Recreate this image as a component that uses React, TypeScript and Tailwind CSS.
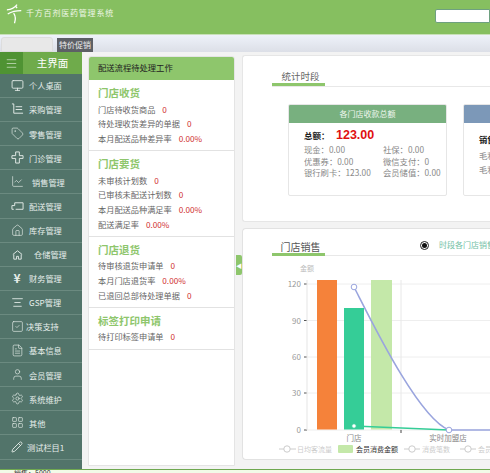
import React from "react";
import { Monitor, Tag, ChartLine, House, AlignCenter, SquareCheck, FileText, User, Settings, LayoutGrid, Pencil, Menu } from "lucide-react";

const font = { fontFamily: '"Noto Sans CJK SC", "Liberation Sans", sans-serif' };

function Cart() { return <svg width="13" height="13" viewBox="0 0 14 14" fill="none" stroke="currentColor"><path d="M1 1h2v10h10M5 4h7M5 7h7" /></svg>; }
function Cross() { return <svg width="13" height="13" viewBox="0 0 14 14" fill="none" stroke="currentColor"><path d="M5 1h4v4h4v3H9v5H5V8H1V5h4z" /></svg>; }
function Truck() { return <svg width="13" height="13" viewBox="0 0 14 14" fill="none" stroke="currentColor"><path d="M4 3h9v7H5M4 3v3H1v4h2" /></svg>; }
function Store() { return <svg width="13" height="13" viewBox="0 0 14 14" fill="none" stroke="currentColor" strokeWidth="1"><path d="M2 7l5-4 5 4M3 7v5h3V9h2v3h3V7" /></svg>; }
function Yen() { return <span className="text-[12px] font-bold leading-none">¥</span>; }

const sw = 1.2;
const items: [React.ReactNode, string, string][] = [
  [<Monitor size={13} strokeWidth={1.6} />, "个人桌面", ""],
  [<Cart />, "采购管理", ""],
  [<Tag size={13} strokeWidth={sw} />, "零售管理", ""],
  [<Cross />, "门诊管理", ""],
  [<ChartLine size={13} strokeWidth={sw} />, "销售管理", "ml-[3px]"],
  [<Truck />, "配送管理", ""],
  [<House size={13} strokeWidth={sw} />, "库存管理", ""],
  [<Store />, "仓储管理", "ml-[5px]"],
  [<Yen />, "财务管理", ""],
  [<AlignCenter size={13} strokeWidth={1.6} />, "GSP管理", ""],
  [<SquareCheck size={13} strokeWidth={sw} />, "决策支持", "-ml-[3px]"],
  [<FileText size={13} strokeWidth={sw} />, "基本信息", ""],
  [<User size={13} strokeWidth={sw} />, "会员管理", ""],
  [<Settings size={13} strokeWidth={sw} />, "系统维护", ""],
  [<LayoutGrid size={13} strokeWidth={sw} />, "其他", ""],
  [<Pencil size={12} strokeWidth={1.8} />, "测试栏目1", "-ml-[2px]"],
];

const groups: { title: string; rows: [string, string][] }[] = [
  { title: "门店收货", rows: [["门店待收货商品", "0"], ["待处理收货差异的单据", "0"], ["本月配送品种差异率", "0.00%"]] },
  { title: "门店要货", rows: [["未审核计划数", "0"], ["已审核未配送计划数", "0"], ["本月配送品种满足率", "0.00%"], ["配送满足率", "0.00%"]] },
  { title: "门店退货", rows: [["待审核退货申请单", "0"], ["本月门店退货率", "0.00%"], ["已退回总部待处理单据", "0"]] },
  { title: "标签打印申请", rows: [["待打印标签申请单", "0"]] },
];

function Chart() {
  const ys: [number, string][] = [[284, "120"], [320.5, "90"], [357, "60"], [393, "30"], [430, "0"]];
  return (
    <svg width="247" height="231" viewBox="243 229 247 231" className="absolute left-0 top-0" style={font}>
      {ys.map(([y, l]) => (
        <g key={l}>
          <line x1="307" y1={y} x2="490" y2={y} stroke="#eeeeee" />
          <line x1="304" y1={y} x2="307" y2={y} stroke="#555" />
          <text x="301" y={y + 3} textAnchor="end" fontSize="8" fill="#999">{l}</text>
        </g>
      ))}
      <text x="307" y="271" textAnchor="middle" fontSize="7" fill="#bbb">金额</text>
      <line x1="307" y1="280" x2="307" y2="430" stroke="#e5e5e5" />
      <line x1="401" y1="280" x2="401" y2="430" stroke="#e8e8e8" />
      <line x1="401" y1="430" x2="401" y2="433" stroke="#444" />
      <rect x="317" y="280" width="20" height="149.5" fill="#f5823a" />
      <rect x="344" y="308" width="20" height="121.5" fill="#35cd97" />
      <rect x="371" y="280" width="21" height="149.5" fill="#c4e8a9" />
      <path d="M354 287 C 370 318, 418 418, 449 430 L490 430" fill="none" stroke="#9aa5de" strokeWidth="1.6" />
      <path d="M354 426 L449 430" fill="none" stroke="#35cd97" strokeWidth="1.6" />
      <circle cx="354" cy="287" r="2.8" fill="#fff" stroke="#9aa5de" />
      <circle cx="354" cy="426" r="2.3" fill="#fff" stroke="#35cd97" />
      <circle cx="449" cy="430" r="2.8" fill="#fff" stroke="#9aa5de" />
      <text x="354" y="441" textAnchor="middle" fontSize="7.5" fill="#888">门店</text>
      <text x="448" y="441" textAnchor="middle" fontSize="7.5" fill="#888">实时加盟店</text>
      <g fontSize="7" fill="#ccc">
        <line x1="279" y1="449" x2="296" y2="449" stroke="#ccc" /><circle cx="287" cy="449" r="3.2" fill="#fff" stroke="#ccc" />
        <text x="297" y="452">日均客流量</text>
        <rect x="338" y="445" width="15" height="8" rx="1" fill="#c4e8a9" />
        <text x="356" y="452" fill="#333">会员消费金额</text>
        <line x1="404" y1="449" x2="420" y2="449" stroke="#ccc" /><circle cx="412" cy="449" r="3.2" fill="#fff" stroke="#ccc" />
        <text x="422" y="452">消费笔数</text>
        <line x1="460" y1="449" x2="476" y2="449" stroke="#ccc" /><circle cx="468" cy="449" r="3.2" fill="#fff" stroke="#ccc" />
        <text x="478" y="452">会员消费</text>
      </g>
    </svg>
  );
}

export default function App() {
  return (
    <div className="w-[490px] h-[473px] overflow-hidden flex flex-col bg-[#f3f3f3] text-[#555]" style={font}>
      <header className="h-[34px] shrink-0 bg-[#86bf60] flex items-start justify-between">
        <div className="flex items-start pl-[6px] pt-[3px] gap-[3px]">
          <svg width="17" height="22" viewBox="0 0 20 26" fill="none" stroke="#fff" strokeWidth="1.5">
            <path d="M1 8c5 0 9-2 12-6M2 13c5-3 10-4 16-4M9 12c2 3 3 6 1 12M11 3l2 3" />
          </svg>
          <span className="text-[8px] tracking-[0.8px] leading-[10px] mt-[5px] text-[#eef6e6] whitespace-nowrap">千方百剂医药管理系统</span>
        </div>
        <div className="w-[55px] h-[14px] mt-[9px] bg-white border border-[#6ea080] rounded-l-[2px]" />
      </header>
      <div className="h-[18px] shrink-0 bg-gradient-to-b from-[#eef2fa] to-[#dcdfe7] flex items-end pl-[1px] gap-[4px] border-t border-[#c8e0b8]">
        <div className="w-[52px] h-[15px] bg-[#e8e8e8] rounded-t-[3px] border border-[#ddd]" />
        <div className="w-[36px] h-[14px] bg-[#5d6066] text-[#eee] text-[8px] flex items-center justify-center whitespace-nowrap">特价促销</div>
      </div>
      <div className="flex-1 min-h-0 flex">
        <aside className="w-[82px] shrink-0 bg-[#52746a] flex flex-col">
          <div className="h-[22px] shrink-0 flex bg-[#6fab4b] text-white">
            <div className="w-[23px] bg-[#4f9333] flex items-center justify-center"><Menu size={13} strokeWidth={1} /></div>
            <div className="flex-1 text-[10.5px] flex items-center justify-center">主界面</div>
          </div>
          {items.map(([icon, label, cls]) => (
            <div key={label} className="h-[24.1px] shrink-0 flex items-center border-b border-[#6b8a80] text-[#e6eeea] text-[8.2px] pl-[10px] gap-[5px] whitespace-nowrap">
              <span className="w-[14px] flex justify-center shrink-0">{icon}</span>
              <span className={cls}>{label}</span>
            </div>
          ))}
        </aside>
        <section className="w-[147px] ml-[6px] mt-[4px] mb-[3px] bg-white border border-[#e4e4e4] rounded-t-[3px] shrink-0 overflow-hidden">
          <div className="h-[23px] bg-[#8ec66c] text-[#222] text-[8.3px] flex items-center pl-[9px] pb-[3px]">配送流程待处理工作</div>
          {groups.map((g) => (
            <div key={g.title} className="border-b border-[#e2e2e2] pl-[9px] pt-[6px] pb-[4.5px]">
              <div className="text-[10.5px] h-[14px] leading-[14px] mb-[1.5px] text-[#8ec66c] font-bold">{g.title}</div>
              {g.rows.map(([k, v]) => (
                <div key={k} className="h-[14.7px] leading-[14.7px] text-[8.2px] text-[#666] whitespace-nowrap">
                  {k}<span className="text-[#d03030] ml-[7px]">{v}</span>
                </div>
              ))}
            </div>
          ))}
        </section>
        <div className="w-[7px] shrink-0 flex items-start justify-end pt-[203px]">
          <div className="w-[6px] h-[20px] bg-[#8ec66c] rounded-r-[2px] text-white text-[6px] flex items-center justify-center">◀</div>
        </div>
        <main className="w-[248px] shrink-0 flex flex-col mt-[3px]">
          <section className="h-[167px] bg-white border-l border-b border-t border-[#e6e6e6] rounded-l-[3px] overflow-hidden pt-[11px]">
            <div className="ml-[29px] border-b border-[#e8e8e8] h-[20px]">
              <div className="w-[53px] h-[19px] border-b-[3px] border-[#8ec66c] text-[9.5px] text-[#666] text-center leading-[18px] pl-[4px]">统计时段</div>
            </div>
            <div className="flex pl-[45px] pt-[17px] gap-[16px] w-[400px]">
              <div className="w-[159px] h-[92px] shrink-0 border border-[#e6e6e6] rounded-[2px] overflow-hidden">
                <div className="h-[18px] bg-[#78b07f] text-[#eef6ee] text-[8px] flex items-center justify-center">各门店收款总额</div>
                <div className="pl-[15px] pt-[4px]">
                  <div className="flex items-center h-[17px]">
                    <span className="text-[8.5px] font-bold text-[#222] w-[32px]">总额：</span>
                    <span className="text-[12.5px] font-bold text-[#e01010] [font-family:'Liberation_Sans']">123.00</span>
                  </div>
                  <div className="grid grid-cols-[79px_1fr] text-[8.3px] leading-[11.7px] text-[#888] whitespace-nowrap">
                    <span>现金：0.00</span><span>社保：0.00</span>
                    <span>优惠券：0.00</span><span>微信支付：0</span>
                    <span>银行刷卡：123.00</span><span>会员储值：0.00</span>
                  </div>
                </div>
              </div>
              <div className="w-[159px] h-[92px] shrink-0 border border-[#e6e6e6] rounded-[2px] overflow-hidden">
                <div className="h-[18px] bg-[#7c98b8]" />
                <div className="pl-[15px] pt-[9px] text-[8.3px] leading-[14px] text-[#888] whitespace-nowrap">
                  <div className="font-bold text-[#222] mb-[2px]">销售总额</div>
                  <div>毛利额</div>
                  <div>毛利率</div>
                </div>
              </div>
            </div>
          </section>
          <section className="h-[232px] mt-[6px] bg-white border-l border-t border-b border-[#e2e2e2] rounded-l-[4px] relative overflow-hidden">
            <Chart />
            <div className="absolute left-[29px] top-[11px] w-[53px] h-[16px] border-b-[3px] border-[#8ec66c] text-[10px] text-[#555] text-center leading-[13px] pl-[4px] bg-white">门店销售</div>
            <div className="absolute left-[82px] right-0 top-[26px] border-b border-[#e8e8e8]" />
            <div className="absolute left-[177px] top-[12px] w-[9px] h-[9px] rounded-full border border-[#222] p-[1px]"><div className="w-full h-full rounded-full bg-[#111]" /></div>
            <div className="absolute left-[196px] top-[11px] text-[8px] leading-[10px] text-[#74bfa6] whitespace-nowrap">时段各门店销售对比</div>
          </section>
        </main>
      </div>
      <footer className="h-[4px] shrink-0 bg-[#f2fbe8] border-t border-[#6fa850] text-[7px] leading-[7px] text-[#333] pl-[14px] overflow-hidden">销售：5000</footer>
    </div>
  );
}
